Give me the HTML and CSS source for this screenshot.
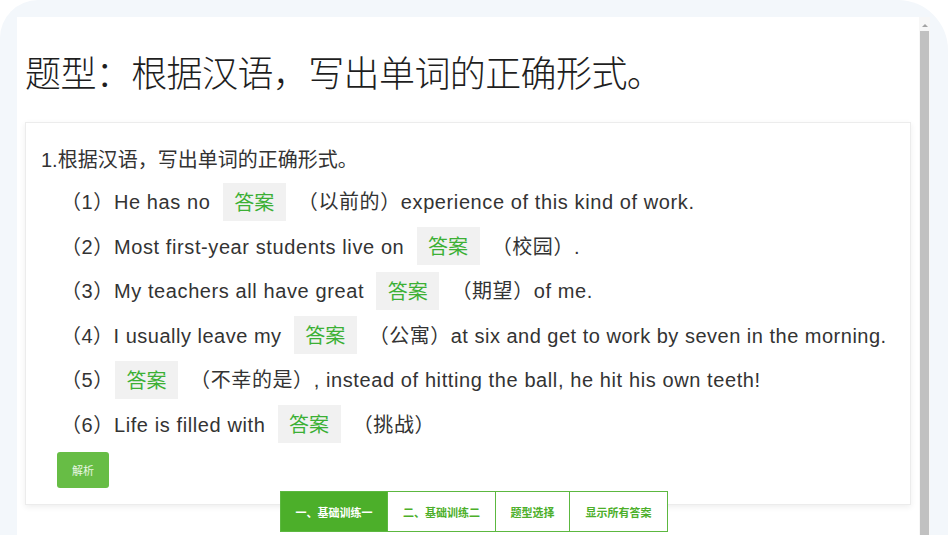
FILE: index.html
```html
<!DOCTYPE html>
<html lang="zh-CN">
<head>
<meta charset="utf-8">
<title>根据汉语，写出单词的正确形式</title>
<link rel="stylesheet" href="styles.css">
</head>
<body>
<div class="frame">
  <div class="panel">
    <div class="content">
      <h1 class="title">题型：根据汉语，写出单词的正确形式。</h1>
      <div class="card">
        <div class="heading">1.根据汉语，写出单词的正确形式。</div>
        <div class="q">（1）He has no <span class="ans">答案</span> （以前的）experience of this kind of work.</div>
        <div class="q">（2）Most first-year students live on <span class="ans">答案</span> （校园）.</div>
        <div class="q">（3）My teachers all have great <span class="ans">答案</span> （期望）of me.</div>
        <div class="q tight">（4）I usually leave my <span class="ans">答案</span> （公寓）at six and get to work by seven in the morning.</div>
        <div class="q">（5）<span class="ans lead">答案</span> （不幸的是）, instead of hitting the ball, he hit his own teeth!</div>
        <div class="q">（6）Life is filled with <span class="ans">答案</span> （挑战）</div>
        <div class="btn-row"><span class="btn">解析</span></div>
      </div>
    </div>
    <div class="scrollbar">
      <div class="arrow"></div>
      <div class="thumb"></div>
    </div>
  </div>
  <div class="tabs">
    <span class="tab active t1">一、基础训练一</span>
    <span class="tab t2">二、基础训练二</span>
    <span class="tab t3">题型选择</span>
    <span class="tab t4">显示所有答案</span>
  </div>
</div>
</body>
</html>
```
FILE: styles.css
```css
html, body {
  margin: 0;
  padding: 0;
  background: #ffffff;
}
body {
  width: 948px;
  height: 535px;
  overflow: hidden;
  font-family: "Liberation Sans", "Noto Sans CJK SC", sans-serif;
}
.frame {
  position: relative;
  height: 535px;
  box-sizing: border-box;
  padding: 17px 18px 0 17px;
  background: #f3f7fb;
  border-radius: 38px 50px 0 0;
}
.panel {
  display: flex;
  height: 518px;
  background: #ffffff;
}
.content {
  flex: 1;
  min-width: 0;
  padding: 0 8px;
}
.title {
  margin: 30px 0 26px 0;
  font-size: 36px;
  line-height: 49px;
  font-weight: 300;
  color: #1e1e1e;
  font-family: "Noto Sans CJK SC", sans-serif;
  letter-spacing: -0.6px;
}
.card {
  border: 1px solid #ececec;
  box-shadow: 0 2px 6px rgba(0, 0, 0, 0.07);
  padding: 19px 15px 16px 15px;
  background: #fff;
}
.heading {
  font-size: 20px;
  line-height: 36px;
  color: #333;
  margin-bottom: 2px;
}
.q {
  margin-left: 20px;
  font-size: 20px;
  line-height: 44.5px;
  color: #333;
  letter-spacing: 0.6px;
  white-space: nowrap;
}
.q.tight {
  letter-spacing: 0.5px;
}
.ans {
  display: inline-block;
  vertical-align: middle;
  height: 38px;
  line-height: 38px;
  padding: 0 11.5px;
  margin: -4px 6px 0 6px;
  background: #f1f1f1;
  color: #3cb035;
  letter-spacing: 0;
  font-family: "Noto Sans CJK SC", sans-serif;
}
.ans.lead {
  margin-left: 1px;
}
.btn-row {
  display: flex;
  margin: 5px 0 0 16px;
}
.btn {
  display: inline-flex;
  align-items: center;
  justify-content: center;
  width: 52px;
  height: 36px;
  border-radius: 3px;
  background: #67bd45;
  color: #eaf7e3;
  font-size: 11px;
  font-family: "Noto Sans CJK SC", sans-serif;
}
.scrollbar {
  width: 11px;
  display: flex;
  flex-direction: column;
  align-items: center;
  background: #f7f7f7;
}
.arrow {
  width: 0;
  height: 0;
  margin: 7px 0 4px;
  border-left: 3px solid transparent;
  border-right: 3px solid transparent;
  border-bottom: 3px solid #a3a3a3;
}
.thumb {
  width: 9px;
  flex: 1;
  background: #c1c1c1;
}
.tabs {
  position: absolute;
  left: 280px;
  top: 491px;
  display: flex;
  height: 41px;
}
.tab {
  display: flex;
  align-items: center;
  justify-content: center;
  box-sizing: border-box;
  height: 41px;
  border: 1px solid #5cb840;
  border-left-width: 0;
  background: #fff;
  color: #4caf2a;
  font-size: 11px;
  font-weight: 700;
  font-family: "Noto Sans CJK SC", sans-serif;
}
.tab.t1 { width: 108px; border-left-width: 1px; }
.tab.t2 { width: 108px; }
.tab.t3 { width: 74px; }
.tab.t4 { width: 98px; }
.tab.active {
  background: #4caf2a;
  color: #ffffff;
}
```
